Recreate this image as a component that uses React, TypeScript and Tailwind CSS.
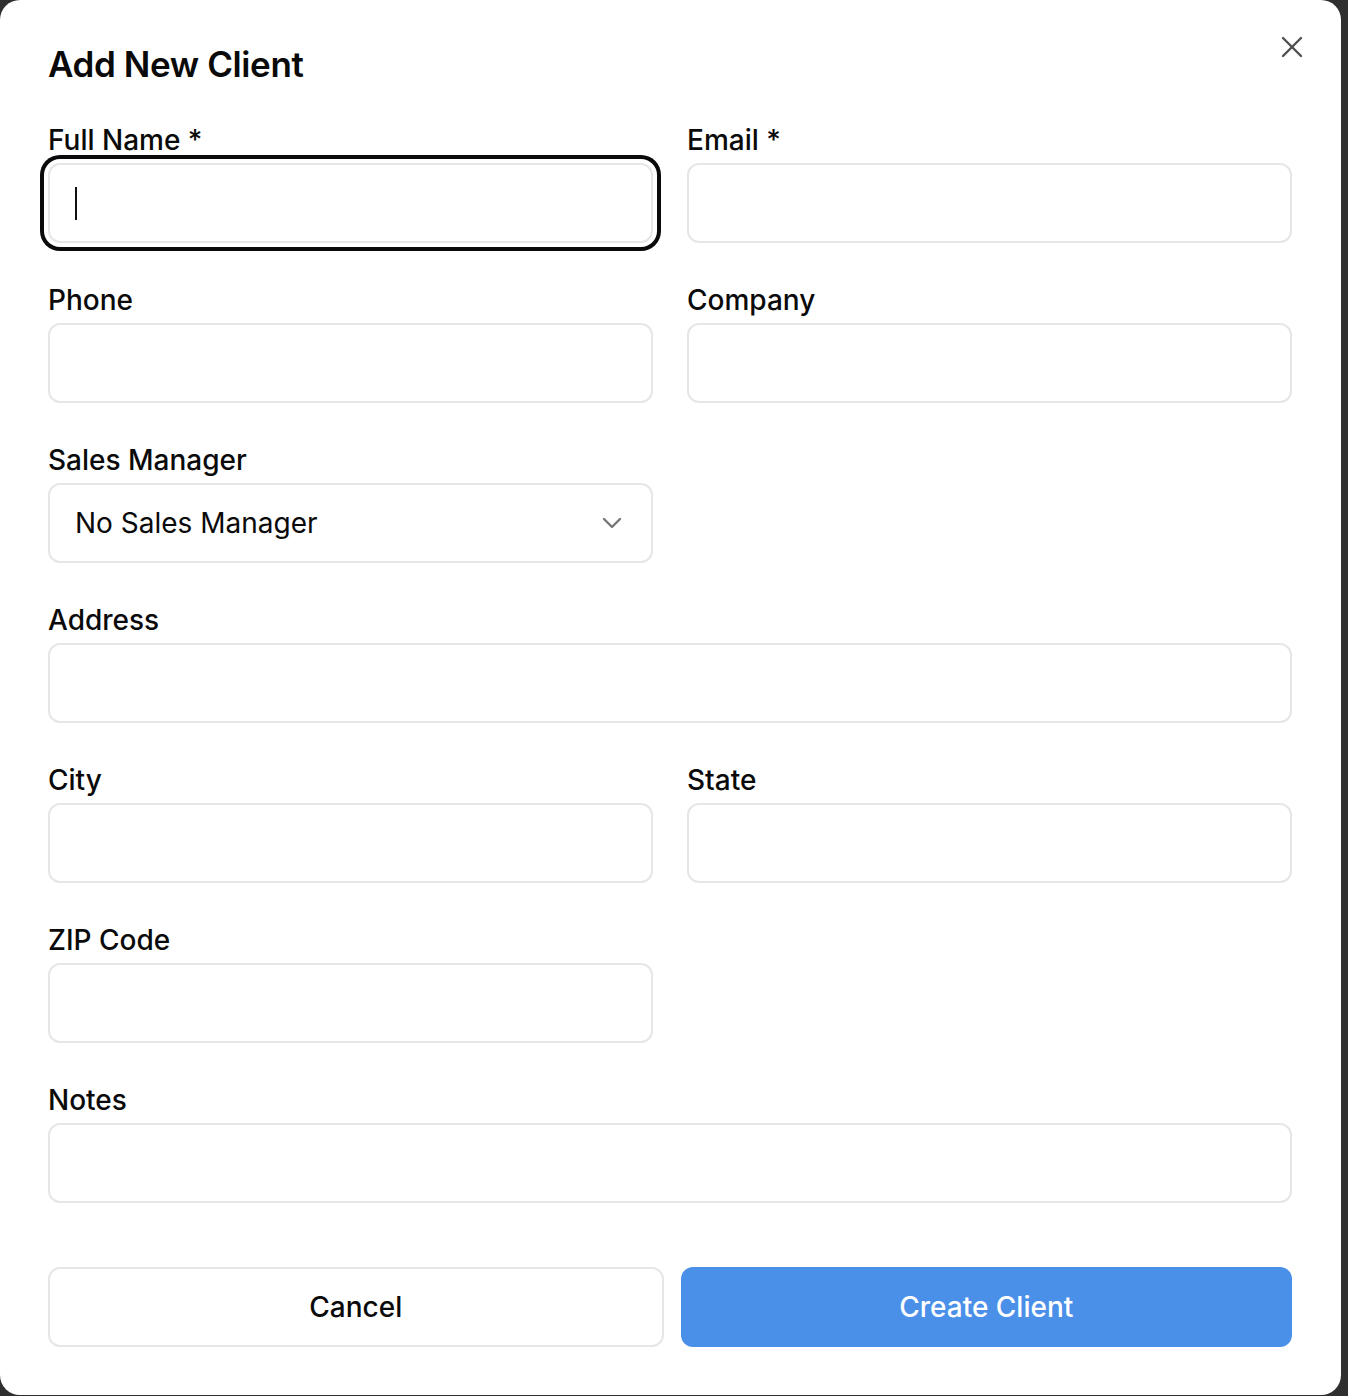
import React from "react";

const font = { fontFamily: "Inter, 'Noto Sans', sans-serif" };

function Field({
  label,
  focused,
  className = "",
  children,
}: {
  label: string;
  focused?: boolean;
  className?: string;
  children?: React.ReactNode;
}) {
  return (
    <div className={"flex flex-col " + className}>
      <label className="text-[28px] leading-[28px] font-medium text-[#0a0a0a] h-[28px]">{label}</label>
      <div
        className={
          "mt-[9px] h-[80px] w-full rounded-[12px] border-2 border-[#e6e6e6] bg-white flex items-center px-[25px] " +
          (focused ? "shadow-[0_0_0_4px_#ffffff,0_0_0_8px_#0a0a0a]" : "")
        }
      >
        {children}
      </div>
    </div>
  );
}

export default function App() {
  return (
    <div className="min-h-[1396px] w-[1348px] bg-[#2f2f2f]" style={font}>
      <div className="relative w-[1341px] h-[1395px] bg-white rounded-[20px] pl-[48px] pr-[49px] pt-[47px]">
        <button className="absolute right-[31px] top-[29px] text-[#505050]">
          <svg width="36" height="36" viewBox="0 0 24 24" fill="none" stroke="currentColor" strokeWidth="1.6" strokeLinecap="round" strokeLinejoin="round">
            <path d="M18 6 6 18" />
            <path d="m6 6 12 12" />
          </svg>
        </button>
        <h2 className="text-[35px] leading-[35px] font-semibold text-[#0a0a0a] tracking-[-0.4px]">Add New Client</h2>
        <div className="mt-[44px] grid grid-cols-2 gap-x-[34px] gap-y-[43px]">
          <Field label="Full Name *" focused>
            <span className="block w-[2px] h-[33px] bg-[#111]" />
          </Field>
          <Field label="Email *" />
          <Field label="Phone" />
          <Field label="Company" />
          <Field label="Sales Manager">
            <span className="flex-1 text-[28px] text-[#0a0a0a]">No Sales Manager</span>
            <svg width="32" height="32" viewBox="0 0 24 24" fill="none" stroke="#777" strokeWidth="1.8" strokeLinecap="round" strokeLinejoin="round" className="mr-[-2px]">
              <path d="m6 9 6 6 6-6" />
            </svg>
          </Field>
          <div />
          <Field label="Address" className="col-span-2" />
          <Field label="City" />
          <Field label="State" />
          <Field label="ZIP Code" />
          <div />
          <Field label="Notes" className="col-span-2" />
        </div>
        <div className="mt-[64px] flex gap-[17px]">
          <button className="flex-1 h-[80px] rounded-[12px] border-2 border-[#e6e6e6] bg-white text-[28px] font-medium text-[#0a0a0a]">
            Cancel
          </button>
          <button className="flex-1 h-[80px] rounded-[12px] bg-[#4a90e9] text-[28px] font-medium text-white">
            Create Client
          </button>
        </div>
      </div>
    </div>
  );
}
